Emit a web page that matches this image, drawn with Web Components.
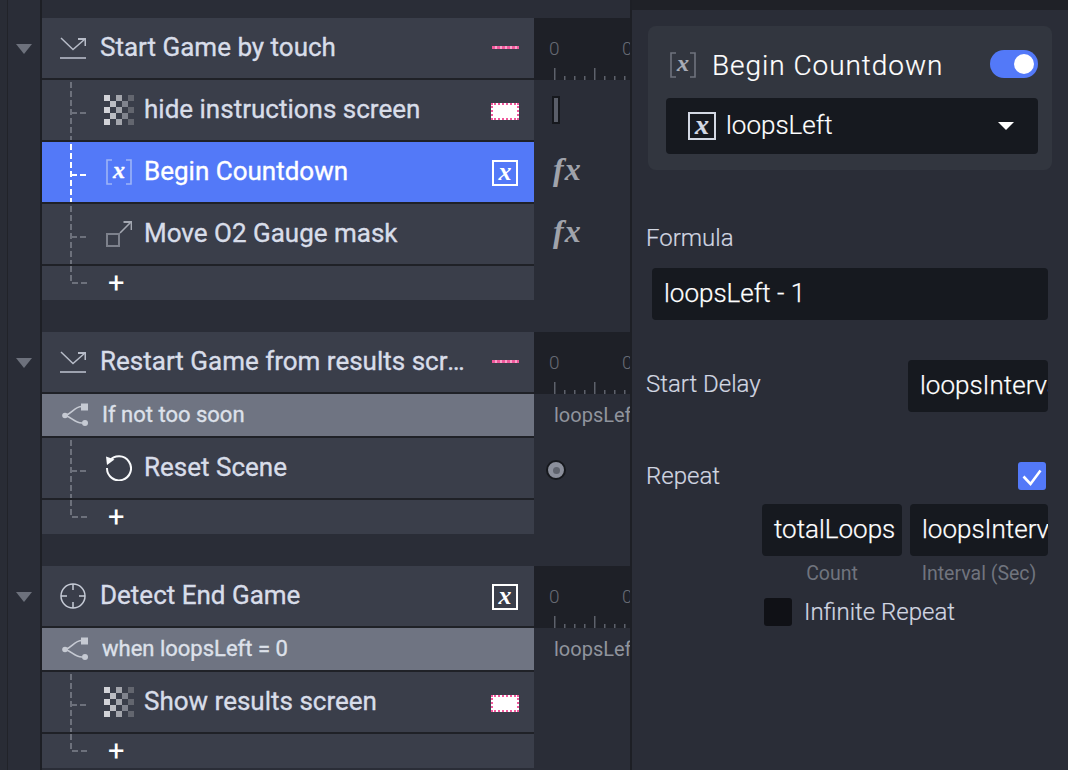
<!DOCTYPE html>
<html lang="en">
<head>
<meta charset="UTF-8">
<title>Rules editor</title>
<style>
  html,body {margin:0;height:100%;background:#2a2d37;overflow:hidden;}
  body {font-family:Roboto,"Liberation Sans",sans-serif;}
  .loops {display:block;font-size:20px;color:#90949d;padding:0 0 0 20px;line-height:42px;white-space:nowrap;}
</style>
</head>
<body>

<app-shell>
  <seq-group slot="list">
    <seq-row kind="trigger" icon="touch" swatch="line" ruler>Start Game by touch</seq-row>
    <seq-row kind="action" icon="checker" swatch="box" track="bar" tree>hide instructions screen</seq-row>
    <seq-row kind="action" icon="bracket" swatch="var" track="fx" tree selected>Begin Countdown</seq-row>
    <seq-row kind="action" icon="move" track="fx" tree>Move O2 Gauge mask</seq-row>
    <add-row></add-row>
  </seq-group>
  <seq-group slot="list">
    <seq-row kind="trigger" icon="touch" swatch="line" ruler>Restart Game from results screen</seq-row>
    <seq-row kind="cond" icon="branch"><span slot="track" class="loops">loopsLeft</span>If not too soon</seq-row>
    <seq-row kind="action" icon="reset" track="dot" tree>Reset Scene</seq-row>
    <add-row></add-row>
  </seq-group>
  <seq-group slot="list">
    <seq-row kind="trigger" icon="target" swatch="var" ruler>Detect End Game</seq-row>
    <seq-row kind="cond" icon="branch"><span slot="track" class="loops">loopsLeft</span>when loopsLeft = 0</seq-row>
    <seq-row kind="action" icon="checker" swatch="box" tree>Show results screen</seq-row>
    <add-row></add-row>
  </seq-group>
  <prop-panel slot="panel"></prop-panel>
</app-shell>

<script>
/* ---------- icons ---------- */
const X_STYLE = "font-family:'Liberation Serif',serif;font-style:italic;font-weight:700;";

function checkerIcon(){
  const cols = ['#d2d3d8','#bcbdc3','#a3a5ac','#80838d','#63666f'];
  let r = '';
  for(let y=0;y<5;y++) for(let x=0;x<5;x++)
    if((x+y)%2==0) r += `<rect x="${x*6}" y="${y*6}" width="6" height="6" fill="${cols[x]}"/>`;
  return `<svg width="30" height="30" viewBox="0 0 30 30">${r}</svg>`;
}
function bracketIcon(col,xcol){
  return `<span style="position:relative;display:block;width:26px;height:26px">
    <svg width="26" height="26" viewBox="0 0 26 26" fill="none" stroke="${col}" stroke-width="1.6" style="position:absolute;left:0;top:0">
      <path d="M6 1H1V25H6M20 1H25V25H20"/></svg>
    <span style="position:absolute;left:0;right:0;top:0;text-align:center;line-height:23px;font-size:24px;color:${xcol};${X_STYLE}">x</span>
  </span>`;
}
function varBox(col,size){
  return `<span style="display:block;box-sizing:border-box;width:${size}px;height:${size}px;border:2px solid ${col};color:${col};text-align:center;line-height:${size-7}px;font-size:${size}px;${X_STYLE}">x</span>`;
}
const ICONS = {
  touch: `<svg width="26" height="22" viewBox="0 0 26 22" fill="none" stroke="#b7bcc8" stroke-width="1.5">
    <path d="M0 21H26" stroke-width="1.6"/><path d="M1 1L13 12.500L25 2"/><path d="M18 2H25.500V9" stroke-width="2"/></svg>`,
  target: `<svg width="26" height="26" viewBox="0 0 26 26" fill="none" stroke="#c6cbd6" stroke-width="1.5">
    <circle cx="13" cy="13" r="12"/><path d="M13 1V7M13 19V25M1 13H7M19 13H25"/></svg>`,
  branch: `<svg width="26" height="24" viewBox="0 0 26 24" fill="none" stroke="#c6cad3" stroke-width="1.6">
    <path d="M3 12.500C10 11 12 3.500 20 3.500M3 12.500C10 14 12 20 20 20"/>
    <circle cx="3" cy="12.500" r="2.800" fill="#c6cad3" stroke="none"/><rect x="19" y="0.500" width="7" height="7" fill="#c6cad3" stroke="none"/>
    <circle cx="23" cy="20" r="3" fill="#c6cad3" stroke="none"/></svg>`,
  move: `<svg width="26" height="26" viewBox="0 0 26 26" fill="none">
    <rect x="1" y="13" width="12" height="12" stroke="#7d818c" stroke-width="2"/>
    <path d="M14 12L25 1" stroke="#a3a7b1" stroke-width="1.600"/><path d="M17.500 1H25.500V9" stroke="#a3a7b1" stroke-width="1.800"/></svg>`,
  reset: `<svg width="26" height="26" viewBox="0 0 26 26" fill="none">
    <path d="M3.500 6A12 12 0 1 1 1 13" stroke="#f8f9fb" stroke-width="2"/>
    <path d="M0 1.500L8.500 4.500L1 10Z" fill="#f8f9fb"/></svg>`
};
function treeLines(col,last){
  const d = last ? 'M1 0V17H17' : 'M1 2V60M1 33H17';
  return `<svg width="18" height="${last?20:60}" style="position:absolute;left:28px;top:0" fill="none" stroke="${col}" stroke-width="2" stroke-dasharray="6 3"><path d="${d}"/></svg>`;
}

/* ---------- layout ---------- */
class AppShell extends HTMLElement {
  constructor(){
    super();
    this.attachShadow({mode:'open'}).innerHTML = `
      <style>
        :host{display:flex;width:1068px;height:770px;overflow:hidden;}
        .list{flex:none;width:630px;padding-top:18px;box-sizing:border-box;display:flex;flex-direction:column;gap:32px;
          background:linear-gradient(90deg,#292c35 0 7px,#212329 7px 8px,#2a2d37 8px 40px,#1d1f25 40px 42px,#2a2d37 42px);}
        .panel{flex:none;width:438px;border-left:2px solid #1d1f25;box-sizing:border-box;}
      </style>
      <div class="list"><slot name="list"></slot></div>
      <div class="panel"><slot name="panel"></slot></div>`;
  }
}
customElements.define('app-shell', AppShell);

class SeqGroup extends HTMLElement {
  constructor(){
    super();
    this.attachShadow({mode:'open'}).innerHTML = `
      <style>
        :host{display:flex;}
        .gutter{flex:none;width:42px;}
        .tri{width:0;height:0;margin:26px 0 0 16px;border:8px solid transparent;border-top:10px solid #6d717c;border-bottom:0;}
        .rows{flex:1;min-width:0;}
      </style>
      <div class="gutter"><div class="tri"></div></div>
      <div class="rows"><slot></slot></div>`;
  }
}
customElements.define('seq-group', SeqGroup);

class TrackRuler extends HTMLElement {
  constructor(){
    super();
    const ticks = [];
    for(let i=0;i<8;i++){
      const tall = i%4==0;
      ticks.push(`<rect x="${20+i*10}" y="${tall?50:58}" width="1.500" height="${tall?12:4}" fill="#5d616b"/>`);
    }
    this.attachShadow({mode:'open'}).innerHTML = `
      <style>
        :host{display:block;position:relative;width:96px;height:62px;background:#1e2027;overflow:hidden;color:#666a74;font-size:19px;font-weight:300;}
        span{position:absolute;top:20px;line-height:22px;}
        svg{display:block;position:absolute;left:0;top:0;}
      </style>
      <svg width="96" height="62">${ticks.join('')}</svg>
      <span style="left:15px">0</span><span style="left:88px">0</span>`;
  }
}
customElements.define('track-ruler', TrackRuler);

/* ---------- rows ---------- */
class SeqRow extends HTMLElement {
  connectedCallback(){
    const kind = this.getAttribute('kind');
    const selected = this.hasAttribute('selected');
    const icon = this.getAttribute('icon');
    const swatch = this.getAttribute('swatch');
    const track = this.getAttribute('track');

    let iconHtml = ICONS[icon];
    if(icon=='checker') iconHtml = checkerIcon();
    if(icon=='bracket') iconHtml = bracketIcon('#9db4f7','#fff');

    let swatchHtml = '';
    if(swatch=='line') swatchHtml = '<div class="sw-line"></div>';
    if(swatch=='box') swatchHtml = '<div class="sw-box"></div>';
    if(swatch=='var') swatchHtml = '<div class="sw-var">' + varBox('#fff',26) + '</div>';

    let trackHtml = '<slot name="track"></slot>';
    if(this.hasAttribute('ruler')) trackHtml = '<track-ruler></track-ruler>';
    if(track=='bar') trackHtml = '<div class="t-bar"></div>';
    if(track=='fx') trackHtml = '<div class="t-fx">fx</div>';
    if(track=='dot') trackHtml = '<div class="t-dot"><i></i></div>';

    this.attachShadow({mode:'open'}).innerHTML = `
      <style>
        :host{display:flex;}
        .main{flex:none;width:492px;box-sizing:border-box;position:relative;display:flex;align-items:center;
          height:62px;background:#3a3e4a;border-bottom:2px solid #1f2127;color:#d8dde9;font-size:26px;font-weight:400;-webkit-text-stroke:.35px currentColor;}
        .main.trigger{padding-left:16px;gap:12px;}
        .main.trigger .ic{width:30px;padding-left:2px;box-sizing:border-box;}
        .main.action{padding-left:62px;gap:10px;}
        .main.action .ic{width:30px;display:flex;justify-content:center;}
        .main.cond{height:44px;padding-left:20px;gap:14px;background:#6f7482;font-size:22px;font-weight:400;color:#dde1ea;}
        .main.selected{background:#5379f8;color:#fff;}
        .ic{flex:none;}
        .ic svg{display:block;}
        .title{flex:1;min-width:0;white-space:nowrap;overflow:hidden;text-overflow:ellipsis;margin-top:-2px;}
        .end{flex:none;width:28px;margin:0 15px 0 4px;display:flex;justify-content:center;-webkit-text-stroke:0;}
        .sw-line{flex:none;width:27px;height:3px;margin-top:-2px;background:repeating-linear-gradient(90deg,#f0589c 0 3px,#f7a3c9 3px 5px);}
        .sw-box{flex:none;box-sizing:border-box;width:28px;height:17px;margin-top:2px;background:#fff;border:2px dotted #f0589c;}
        .sw-var{margin-top:2px;}
        .track{flex:none;width:96px;overflow:hidden;}
        .t-bar{box-sizing:border-box;width:8px;height:28px;margin:16px 0 0 18px;background:#5a5e69;border:2px solid #16181d;}
        .t-fx{margin:9px 0 0 19px;color:#a0a3ab;font-size:32px;line-height:36px;letter-spacing:1px;${X_STYLE}}
        .t-dot{box-sizing:border-box;width:20px;height:20px;margin:22px 0 0 12px;border-radius:50%;background:#8b8f9b;border:2px solid #16181d;display:flex;align-items:center;justify-content:center;}
        .t-dot i{width:7px;height:7px;border-radius:50%;background:#5f636d;}
      </style>
      <div class="main ${kind}${selected?' selected':''}">
        ${this.hasAttribute('tree') ? treeLines(selected?'#fff':'#6d717c',false) : ''}
        <div class="ic">${iconHtml}</div>
        <div class="title"><slot></slot></div>
        <div class="end">${swatchHtml}</div>
      </div>
      <div class="track">${trackHtml}</div>`;
  }
}
customElements.define('seq-row', SeqRow);

class AddRow extends HTMLElement {
  constructor(){
    super();
    this.attachShadow({mode:'open'}).innerHTML = `
      <style>
        :host{display:block;width:492px;height:34px;background:#3a3e4a;position:relative;box-sizing:border-box;padding-left:66px;
          color:#fff;font-size:29px;line-height:34px;font-weight:400;}
      </style>
      ${treeLines('#6d717c',true)}+`;
  }
}
customElements.define('add-row', AddRow);

/* ---------- right panel ---------- */
class TextBox extends HTMLElement {
  constructor(){
    super();
    this.attachShadow({mode:'open'}).innerHTML = `
      <style>
        :host{display:block;box-sizing:border-box;height:52px;background:#16191f;border-radius:4px;padding-left:12px;
          overflow:hidden;white-space:nowrap;color:#fff;font-size:26px;line-height:51px;font-weight:300;-webkit-text-stroke:.25px currentColor;}
      </style><slot></slot>`;
  }
}
customElements.define('text-box', TextBox);

class ToggleSwitch extends HTMLElement {
  constructor(){
    super();
    this.attachShadow({mode:'open'}).innerHTML = `
      <style>
        :host{display:flex;justify-content:flex-end;align-items:center;box-sizing:border-box;width:48px;height:28px;border-radius:14px;background:#5379f8;padding-right:4px;}
        i{width:20px;height:20px;border-radius:50%;background:#fff;}
      </style><i></i>`;
  }
}
customElements.define('toggle-switch', ToggleSwitch);

class PropPanel extends HTMLElement {
  constructor(){
    super();
    this.attachShadow({mode:'open'}).innerHTML = `
      <style>
        :host{display:block;height:770px;color:#d2d7e2;font-size:24px;font-weight:300;-webkit-text-stroke:.2px currentColor;}
        .top{height:10px;background:#1f2127;}
        .body{padding:16px 16px 0;}
        .card{box-sizing:border-box;height:144px;background:#32363f;border-radius:8px;padding:24px 14px 0 18px;}
        .head{display:flex;align-items:center;height:28px;}
        .head .ic{margin:2px 16px 0 4px;}
        .head .name{flex:1;color:#fff;font-size:28px;letter-spacing:.95px;line-height:28px;margin-top:3px;white-space:nowrap;}
        .select{display:flex;align-items:center;box-sizing:border-box;height:56px;margin-top:20px;background:#16191f;border-radius:4px;padding:0 24px 0 22px;color:#fff;font-size:26px;}
        .select .name{flex:1;margin-left:10px;margin-top:-2px;}
        .caret{width:0;height:0;border:8px solid transparent;border-top:8px solid #fff;border-bottom:0;}
        .label{line-height:30px;margin-left:-2px;white-space:nowrap;}
        .formula{margin:15px 4px 0 4px;}
        .row{display:flex;justify-content:space-between;}
        .delay{margin-top:40px;padding-right:4px;}
        .delay .label{margin-top:9px;}
        .delay text-box{width:140px;}
        .repeat{margin-top:50px;padding-right:6px;align-items:center;height:28px;}
        .check{width:28px;height:28px;border-radius:3px;background:#5379f8;}
        .check svg{display:block;}
        .pair{display:flex;gap:8px;margin:14px 4px 0 114px;}
        .pair>div{flex:none;}
        .pair .a{width:140px;}
        .pair .b{width:138px;}
        .cap{text-align:center;color:#70747e;font-size:19.500px;font-weight:400;-webkit-text-stroke:0;line-height:26px;margin-top:5px;white-space:nowrap;}
        .inf{display:flex;align-items:center;gap:12px;margin:11px 0 0 116px;}
        .inf i{width:28px;height:28px;border-radius:3px;background:#101116;}
        .inf span{margin-top:-1px;}
      </style>
      <div class="top"></div>
      <div class="body">
        <div class="card">
          <div class="head">
            <div class="ic">${bracketIcon('#6f737e','#a8acb6')}</div>
            <div class="name">Begin Countdown</div>
            <toggle-switch></toggle-switch>
          </div>
          <div class="select">
            ${varBox('#d3d8e3',28)}
            <div class="name">loopsLeft</div>
            <div class="caret"></div>
          </div>
        </div>
        <div class="label" style="margin-top:53px">Formula</div>
        <text-box class="formula">loopsLeft - 1</text-box>
        <div class="row delay">
          <div class="label">Start Delay</div>
          <text-box>loopsInterval</text-box>
        </div>
        <div class="row repeat">
          <div class="label">Repeat</div>
          <div class="check"><svg width="28" height="28" fill="none" stroke="#fff" stroke-width="2.600"><path d="M5.500 14.500L12.500 22L22.500 8.500"/></svg></div>
        </div>
        <div class="pair">
          <div class="a"><text-box>totalLoops</text-box><div class="cap">Count</div></div>
          <div class="b"><text-box>loopsInterval</text-box><div class="cap">Interval (Sec)</div></div>
        </div>
        <div class="inf"><i></i><span>Infinite Repeat</span></div>
      </div>`;
  }
}
customElements.define('prop-panel', PropPanel);
</script>
</body>
</html>
